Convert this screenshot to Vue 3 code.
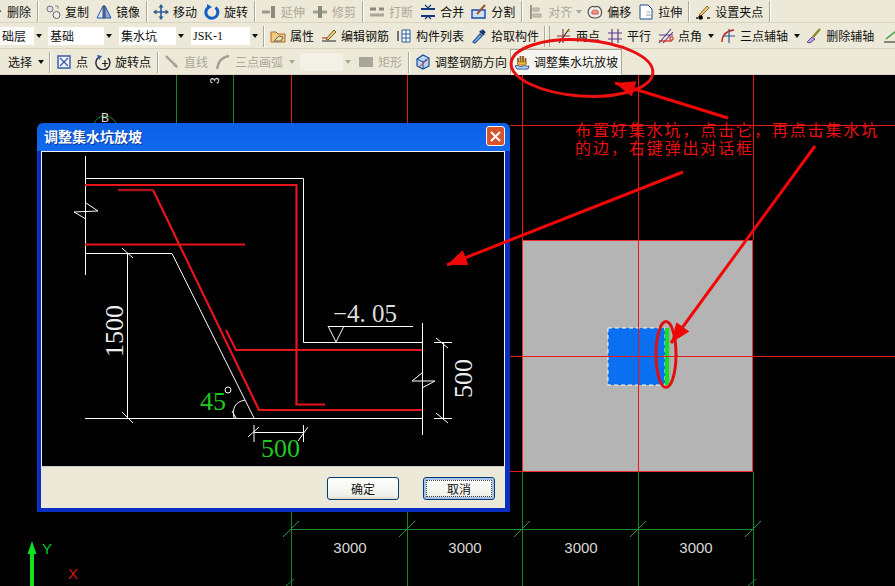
<script setup>
// 图标：每个 [d, stroke, fill, strokeWidth]，16x16
const ic = {
  erase: [["M2 14 L10 4 L14 7 L7 15 Z", "#6b6b3a", "#e8c840", 1]],
  copy: [["M5 5 m-3 0 a3 3 0 1 0 6 0 a3 3 0 1 0 -6 0", "#777", "#dde", 1], ["M11 11 m-3 0 a3.5 3.5 0 1 0 7 0 a3.5 3.5 0 1 0 -7 0", "#666", "#eee", 1], ["M10 2 L13 2 M13 2 L13 5", "#888", "none", 1]],
  mirror: [["M7 2 L1 14 L7 14 Z", "#1f4fa8", "#dfe8f6", 1], ["M9 2 L15 14 L9 14 Z", "#1f4fa8", "#8fb0dd", 1], ["M8 1 L8 15", "#222", "none", 1]],
  move: [["M8 1 L8 15 M1 8 L15 8", "#2a5a9a", "none", 1.6], ["M8 0 L5.5 3.5 L10.5 3.5 Z M8 16 L5.5 12.5 L10.5 12.5 Z M0 8 L3.5 5.5 L3.5 10.5 Z M16 8 L12.5 5.5 L12.5 10.5 Z", "none", "#2a5a9a", 1]],
  rotate: [["M5 3 A6 6 0 1 0 11.5 3.5", "#1560c8", "none", 3], ["M3 0 L8 3 L3 6 Z", "none", "#1560c8", 1]],
  extend: [["M1 8 L9 8", "#9c9a8c", "none", 3], ["M12 2 L12 14", "#8d8b7c", "none", 4]],
  trim: [["M1 8 L15 8", "#a5a394", "none", 3], ["M8 2 L8 14", "#8d8b7c", "none", 4]],
  brk: [["M1 5 L7 5 M10 5 L15 5", "#8a8878", "none", 3], ["M1 11 L15 11", "#a8a698", "none", 3]],
  merge: [["M1 5 L15 5 M1 12 L15 12", "#123a78", "none", 2], ["M5 1 L8 4 L11 1 M5 15 L8 12 L11 15", "#123a78", "none", 1.2]],
  split: [["M1 6 L14 6 L14 14 L1 14 Z", "#1a48b0", "#cfe0f8", 1.4], ["M6 10 L14 1", "#a0522d", "none", 2]],
  align: [["M3 1 L3 15", "#999787", "none", 2], ["M5 4 H11 V7 H5 Z M5 10 H13 V13 H5 Z", "#aca899", "#c6c4b6", 1]],
  offset: [["M2 11 C-1 5 5 1 8 3 C12 1 16 6 14 11 C12 15 4 15 2 11 Z", "#555", "#eee", 1.2], ["M5 10 C4 7 7 5 8 6.5 C10 5 12 8 11 10 Z", "#c8504a", "#f0a080", 1]],
  stretch: [["M2 1 H10 L14 5 V15 H2 Z", "#1a4a90", "#fff", 1], ["M9 8 L12 8 M8 11 L13 11", "#999", "none", 1]],
  grip: [["M1 14 L3 14 M6 14 L8 14 M12 14 L15 14", "#222", "none", 1.4], ["M4 11 L12 2 L14 4 L6 12 Z", "#8a6a30", "#e6c878", 1], ["M4 12 H7 V15 H4 Z", "#000", "#000", 1]],
  attr: [["M1 4 H6 L8 6 H15 V14 H1 Z", "#b06a20", "#f4c880", 1], ["M4 13 L9 8 L13 9 L11 13 Z", "#666", "#eee0a0", 1]],
  edit: [["M1 13 L15 13", "#444", "none", 1.2], ["M5 11 L13 2 L15 4 L7 12 Z", "#7a5a20", "#e8d080", 1], ["M1 10 L6 10", "#c83020", "none", 1.2]],
  list: [["M6 2 H14 V14 H6 Z", "#2a5a9a", "#fff", 1], ["M6 6 H14 M6 10 H14 M10 2 V14", "#2a5a9a", "none", 1], ["M2 3 V13", "#555", "none", 1.6]],
  pick: [["M2 14 L9 6 L11 8 L4 15 Z", "#2a5a9a", "#8fc0f0", 1.2], ["M9 3 L13 7 M11 2 L14 5", "#1a3a70", "none", 2.4]],
  two: [["M3 15 L13 1", "#333", "none", 1.2], ["M1 8 L14 8 M7 1 L7 15", "#883040", "none", 1.1], ["M12 3 L14 3", "#c6b820", "none", 2]],
  par: [["M1 5 H15 M1 11 H15 M5 1 V15 M11 1 V15", "#5a3a90", "none", 1.2]],
  ang: [["M1 15 L13 1 M5 15 L15 4 M1 7 H15", "#5a3a90", "none", 1.1], ["M1 13 H14", "#d02020", "none", 1.2], ["M12 9 h3 v3 h-3 z", "#d02020", "none", 1]],
  tri: [["M2 14 C2 7 6 3 14 2", "#d02020", "none", 1.4], ["M9 1 V15 M3 8 H15", "#2a5a9a", "none", 1.2]],
  delAxis: [["M1 14 L6 9 L9 11 L4 15 Z", "#6a4a90", "#c0a0e0", 1], ["M7 9 L14 1", "#8a8a30", "none", 2.4]],
  next: [["M1 14 H15", "#222", "none", 1], ["M3 11 L13 3", "#3a9a3a", "none", 1.4]],
  point: [["M2 2 H14 V14 H2 Z", "#3a5aa8", "#eef2fb", 1.4], ["M4 4 L12 12 M12 4 L4 12", "#3a5aa8", "none", 1.2]],
  rotPt: [["M4 3 A7 7 0 1 0 13 4", "#223", "none", 1.4], ["M2 1 L7 2 L4 6 Z", "none", "#2a5a9a", 1], ["M10 6 V13 M7 9.5 H13", "#222", "none", 1.2]],
  line: [["M2 2 L13 13", "#a3a193", "none", 2.4], ["M14 14 L12 9 L9 12 Z", "none", "#a3a193", 1]],
  arc: [["M2 15 C3 7 7 3 14 2", "#a3a193", "none", 2.4]],
  rect: [["M1 3 H15 V13 H1 Z", "none", "#a8a698", 1]],
  cube: [["M2 5 L8 1 L14 4 V12 L8 15 L2 12 Z", "#1a4a9a", "#bcd4f2", 1.2], ["M2 5 L8 8 L14 4 M8 8 V15", "#1a4a9a", "none", 1], ["M4 13 L12 6", "#b83a30", "none", 1]],
  hand: [["M1 12 C4 10 6 14 9 12 C11 11 13 13 15 12 L14 15 H3 Z", "#2a5a9a", "#bcd4f2", 1], ["M4 10 V4 M6.5 10 V2 M9 10 V2 M11.5 10 V4", "#8a5a10", "none", 1.8], ["M3.5 8 H12 V11 H4 Z", "#b07a20", "#f0c040", 1]],
};

const t = (label, icon, off = false) => ({ kind: "tool", label, icon: ic[icon], off });
const sep = { kind: "sep" };
const arrow = (off = false) => ({ kind: "arrow", off });
const sel = (label, cls) => ({ kind: "select", label, cls });

const row1 = [
  { ...t("删除", "erase"), cls: "first" }, { kind: "sep", cls: "sep-wide" }, t("复制", "copy"), t("镜像", "mirror"), sep,
  t("移动", "move"), t("旋转", "rotate"), sep,
  t("延伸", "extend", true), t("修剪", "trim", true), sep,
  t("打断", "brk", true), t("合并", "merge"), t("分割", "split"), sep,
  t("对齐", "align", true), { ...arrow(true), cls: "arrow-narrow" }, t("偏移", "offset"), t("拉伸", "stretch"), sep,
  t("设置夹点", "grip"), sep,
];
const row2 = [
  sel("础层", "s1"), sel("基础", "s2"), sel("集水坑", "s3"), sel("JSK-1", "s4"), sep,
  t("属性", "attr"), t("编辑钢筋", "edit"), t("构件列表", "list"), t("拾取构件", "pick"), { kind: "sep", cls: "sep-double" },
  t("两点", "two"), t("平行", "par"), t("点角", "ang"), arrow(), t("三点辅轴", "tri"), arrow(), t("删除辅轴", "delAxis"),
  { ...t("", "next"), cls: "tail" },
];
const row3 = [
  { kind: "label", label: "选择" }, arrow(), sep,
  t("点", "point"), t("旋转点", "rotPt"), sep,
  t("直线", "line", true), t("三点画弧", "arc", true), arrow(true),
  { kind: "select", label: "", cls: "s5" },
  t("矩形", "rect", true), sep,
  t("调整钢筋方向", "cube"),
  { ...t("调整集水坑放坡", "hand"), cls: "pressed" },
];
const rows = [row1, row2, row3];

// 网格与标注
const gridX = [291, 407, 522, 638, 753];
const dims = [350, 465, 581, 696];

function head(a) {
  const dx = a.tip[0] - a.tail[0];
  const dy = a.tip[1] - a.tail[1];
  const len = Math.hypot(dx, dy);
  const ux = dx / len;
  const uy = dy / len;
  const bx = a.tip[0] - ux * 20;
  const by = a.tip[1] - uy * 20;
  const w = 8;
  return `${a.tip[0]},${a.tip[1]} ${bx - uy * w},${by + ux * w} ${bx + uy * w},${by - ux * w}`;
}
const arrows = [
  { tail: [728, 118], tip: [615, 83] },
  { tail: [683, 172], tip: [447, 265] },
  { tail: [815, 146], tip: [671, 343] },
];
</script>

<template>
  <div class="app">
    <header class="bars">
      <div v-for="(row, i) in rows" :key="i" class="bar">
        <template v-for="(it, j) in row" :key="j">
          <span v-if="it.kind === 'sep'" class="sep" :class="it.cls" />
          <span v-else-if="it.kind === 'arrow'" class="arrow" :class="[it.cls, { off: it.off }]"><i /></span>
          <span v-else-if="it.kind === 'label'" class="tool plain">{{ it.label }}</span>
          <span v-else-if="it.kind === 'select'" class="select" :class="it.cls">
            <span class="select-text">{{ it.label }}</span>
            <span class="select-btn"><i /></span>
          </span>
          <span v-else class="tool" :class="[it.cls, { off: it.off }]">
            <span class="icon">
              <svg width="16" height="16" viewBox="0 0 16 16">
                <path v-for="(p, k) in it.icon" :key="k" :d="p[0]" :stroke="p[1]" :fill="p[2]" :stroke-width="p[3]" />
              </svg>
            </span>
            <span v-if="it.label">{{ it.label }}</span>
          </span>
        </template>
      </div>
    </header>

    <main class="canvas">
      <svg class="cad" width="895" height="511" viewBox="0 75 895 511">
        <g stroke="#14882a" fill="none">
          <path d="M176.5 75V123M233.5 75V123" />
          <path v-for="x in gridX" :key="x" :d="`M${x + 0.5} 472V586`" />
          <path d="M291 529.5H753" stroke="#1a8a2a" />
          <path v-for="x in gridX" :key="'t' + x" :d="`M${x - 8} 537L${x + 8} 521`" stroke="#2c9a3c" />
          <path d="M286 586L294 579M748 586L756 579" />
          <circle cx="105" cy="128" r="12" />
        </g>
        <text x="101" y="122" class="tiny" fill="#ddd">B</text>
        <text transform="translate(219 84) rotate(-90)" class="tiny" fill="#ddd">3</text>

        <rect x="522.5" y="240.5" width="230" height="231" fill="#b4b4b4" stroke="#f03030" />
        <rect x="608" y="328" width="57" height="57" fill="#0a6ff0" stroke="#fff" stroke-dasharray="4 3" />
        <rect x="665" y="328" width="4" height="57" fill="#10e020" />
        <rect x="669" y="328" width="2" height="57" fill="#a6b0a6" />
        <g stroke="#e81818" fill="none">
          <path d="M407.5 75V123M522.5 75V240M638.5 75V472M753.5 75V240" />
          <path d="M291.5 75V123" />
          <path d="M510 125.5H895M510 356.5H895M510 471.5H522" />
        </g>

        <path d="M32 586V552" stroke="#10e020" stroke-width="4" />
        <path d="M32 541L27.5 554H36.5Z" fill="#10e020" />
        <text x="42" y="554" class="axis" fill="#10c820">Y</text>
        <text x="68" y="579" class="axis" fill="#d01818">X</text>
        <text v-for="x in dims" :key="x" :x="x" y="553" class="dim" text-anchor="middle">3000</text>
      </svg>

      <section class="dialog">
        <div class="title">
          <span>调整集水坑放坡</span>
          <span class="close">
            <svg width="11" height="11" viewBox="0 0 11 11"><path d="M1 1L10 10M10 1L1 10" stroke="#fff" stroke-width="2" /></svg>
          </span>
        </div>
        <div class="body">
          <div class="client">
            <svg width="462" height="314" viewBox="42 152 462 314">
              <g stroke="#fff" fill="none">
                <path d="M85.5 156V275M85 178.5H303.5V342.5H422.5M422.5 323V435" />
                <path d="M85 253.5H172L254 418M85 418.5H422.5" />
                <path d="M86 203L98 211L74 212L86 219" />
                <path d="M422 373L412 381L435 381L422 388" />
                <path d="M127.5 253V418M122 248L133 258M122 412L133 423" />
                <path d="M328 326.5H413M328 326L336 342L344 326" />
                <path d="M443.5 342V418M434 342.5H452M434 418.5H452M436 338L448 348M436 413L448 423" />
                <path d="M234 418C232 408 235 402 245 400M232 411L236 418" />
                <path d="M254 425V442M303.5 425V442M254 432.5H303.5M248 437L259 427M298 441L308 427" />
                <circle cx="228" cy="390" r="3" />
              </g>
              <g fill="none" stroke="#e8141c" stroke-width="2.2">
                <path d="M85 185H296.5V404.5H325" />
                <path d="M85 244.5H245" />
                <path d="M153 190L259 410H422" />
                <path d="M226 330L236 350H422" />
              </g>
              <path d="M118 190H153" stroke="#a81418" stroke-width="2.6" />
              <text transform="translate(123 357) rotate(-90)" class="cad-text" fill="#eee">1500</text>
              <text transform="translate(472 398) rotate(-90)" class="cad-text" fill="#eee">500</text>
              <text x="333" y="322" class="cad-text level" fill="#ddd">−4. 05</text>
              <text x="200" y="410" class="cad-text" fill="#20c820">45</text>
              <text x="261" y="457" class="cad-text" fill="#20c820">500</text>
            </svg>
          </div>
          <div class="footer">
            <button class="btn">确定</button>
            <button class="btn focus">取消</button>
          </div>
        </div>
      </section>
    </main>

    <svg class="notes" width="895" height="586" viewBox="0 0 895 586">
      <ellipse cx="582" cy="68" rx="71" ry="28" transform="rotate(4 582 68)" fill="none" stroke="#e81010" stroke-width="3" />
      <ellipse cx="666" cy="354.500" rx="10" ry="33" fill="none" stroke="#e01010" stroke-width="3" />
      <g v-for="(a, i) in arrows" :key="i">
        <line :x1="a.tail[0]" :y1="a.tail[1]" :x2="a.tip[0]" :y2="a.tip[1]" stroke="#f00808" stroke-width="3" />
        <polygon :points="head(a)" fill="#f00808" />
      </g>
      <text x="575" y="136" class="note">布置好集水坑，点击它，再点击集水坑</text>
      <text x="575" y="154" class="note">的边，右键弹出对话框</text>
    </svg>
  </div>
</template>

<style>
html,
body {
  margin: 0;
  background: #000;
}
</style>

<style scoped>
.app {
  position: relative;
  width: 895px;
  height: 586px;
  overflow: hidden;
  display: flex;
  flex-direction: column;
  font: 12px "Noto Sans CJK SC", "Liberation Sans", sans-serif;
  color: #111;
}
.bars {
  flex: none;
  height: 75px;
  background: #ece9d8;
}
.bar {
  height: 26px;
  display: flex;
  align-items: center;
  white-space: nowrap;
  box-shadow: inset 0 -1px 0 #d8d4c0;
}
.bar:first-child {
  height: 23px;
}
.tool {
  flex: none;
  display: inline-flex;
  align-items: center;
  gap: 3px;
  padding: 0 3px;
  line-height: 16px;
}
.tool.off {
  color: #aca899;
}
.tool.first {
  margin-left: -17px;
}
.tool.plain:first-child {
  margin-left: -16px;
}
.tool.plain {
  padding-left: 24px;
  padding-right: 3px;
}
.tool.tail {
  margin-left: 2px;
}
.tool.pressed {
  height: 26px;
  box-sizing: border-box;
  background: #f5f4ee;
  border: 1px solid #aca899;
  border-bottom-color: #fff;
  padding: 0 3px 0 2px;
}
.icon {
  flex: none;
  width: 18px;
  height: 16px;
  display: flex;
  justify-content: center;
}
.sep {
  flex: none;
  width: 6px;
  height: 21px;
  box-sizing: border-box;
  border-left: 3px solid transparent;
  position: relative;
}
.sep::before {
  content: "";
  display: block;
  width: 1px;
  height: 21px;
  background: #aca899;
  box-shadow: 1px 0 0 #fff;
}
.sep-wide {
  width: 7px;
}
.sep-double {
  width: 10px;
  border-left-width: 2px;
}
.sep-double::after {
  content: "";
  position: absolute;
  left: 5px;
  top: 0;
  width: 1px;
  height: 21px;
  background: #aca899;
}
.arrow {
  flex: none;
  width: 11px;
  display: inline-flex;
  justify-content: center;
}
.arrow-narrow {
  width: 8px;
}
.arrow i,
.select-btn i {
  width: 0;
  height: 0;
  border: 3px solid transparent;
  border-top: 4px solid #111;
  border-bottom: 0;
}
.arrow.off i {
  border-top-color: #aca899;
}
.select {
  flex: none;
  height: 18px;
  display: flex;
  background: #fff;
  margin-right: 5px;
}
.select-text {
  flex: 1;
  padding-left: 2px;
  line-height: 18px;
  overflow: hidden;
}
.select-btn {
  flex: none;
  width: 10px;
  background: #ece9d8;
  display: flex;
  align-items: center;
  justify-content: center;
}
.s1 {
  width: 44px;
  margin-right: 4px;
}
.s2 {
  width: 66px;
}
.s3 {
  width: 67px;
}
.s4 {
  width: 69px;
  margin-right: 0;
  font-family: "Liberation Serif", serif;
}
.s5 {
  width: 53px;
  margin: 0 1px 0 3px;
  background: #f3f1e6;
}
.s5 .select-btn i {
  border-top-color: #aca899;
}
.canvas {
  flex: 1;
  position: relative;
  background: #000;
}
.cad {
  position: absolute;
  inset: 0;
  display: block;
}
.tiny {
  font: 12px "Liberation Sans", sans-serif;
}
.axis {
  font: 15px "Liberation Sans", sans-serif;
}
.dim {
  font: 15px "Liberation Sans", sans-serif;
  fill: #d8d8d8;
}
.dialog {
  position: absolute;
  left: 37px;
  top: 48px;
  width: 473px;
  height: 389px;
  display: flex;
  flex-direction: column;
  border-radius: 6px 6px 0 0;
  background: linear-gradient(180deg, #0a5fe6 0%, #1c74f4 14%, #0d5ee0 100%);
  box-sizing: border-box;
}
.title {
  flex: none;
  height: 28px;
  display: flex;
  align-items: center;
  justify-content: space-between;
  padding: 0 5px 2px 7px;
  box-sizing: border-box;
  color: #fff;
  font-weight: 700;
  font-size: 14px;
  text-shadow: 1px 1px 0 #0a3a9a;
}
.close {
  width: 19px;
  height: 20px;
  box-sizing: border-box;
  display: flex;
  align-items: center;
  justify-content: center;
  background: #d9542c;
  border: 1px solid #f5f5f5;
  border-radius: 3px;
}
.body {
  flex: 1;
  display: flex;
  flex-direction: column;
  background: #0a2fc0;
  padding: 0 5px 4px 4px;
  min-height: 0;
}
.client {
  flex: none;
  height: 316px;
  box-sizing: border-box;
  background: #000;
  border: 1px solid #f2f2f2;
  border-bottom-color: #ccc;
}
.client svg {
  display: block;
}
.cad-text {
  font: 26px "Liberation Serif", serif;
}
.level {
  font-size: 25px;
}
.footer {
  flex: 1;
  background: #ece9d8;
  display: flex;
  justify-content: flex-end;
  align-items: center;
  gap: 24px;
  padding: 2px 10px 0 0;
}
.btn {
  width: 72px;
  height: 23px;
  padding: 0;
  font: 12px "Noto Sans CJK SC", sans-serif;
  color: #111;
  border: 1px solid #003c74;
  border-radius: 3px;
  background: linear-gradient(180deg, #fff, #f0f0ea 85%, #dcd8c8);
}
.btn.focus {
  box-shadow: inset 0 0 0 2px #a8c0e8;
  outline: 1px dotted #444;
  outline-offset: -4px;
}
.notes {
  position: absolute;
  inset: 0;
  pointer-events: none;
}
.note {
  font: 16px "Noto Sans CJK SC", sans-serif;
  letter-spacing: 1.9px;
  fill: #e81010;
}
</style>
